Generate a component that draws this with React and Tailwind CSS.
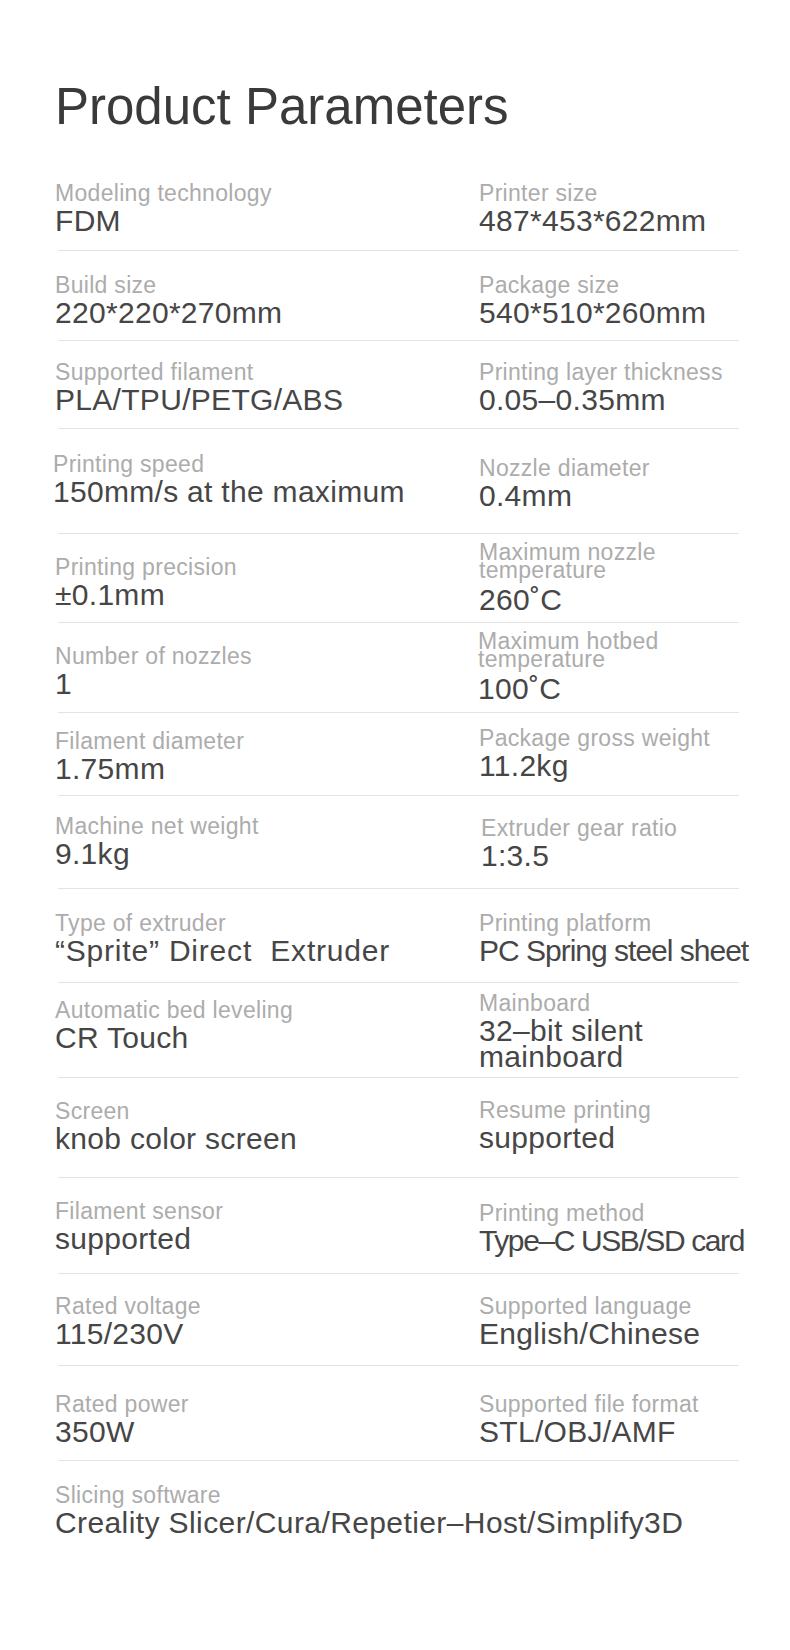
import React from 'react';

const rows = [
  {
    h: 'h-[118px]',
    left: { label: 'Modeling technology', value: 'FDM', pt: 'pt-[48px]' },
    right: { label: 'Printer size', value: '487*453*622mm', pt: 'pt-[48px]' },
  },
  {
    h: 'h-[89px]',
    left: { label: 'Build size', value: '220*220*270mm', pt: 'pt-[21px]' },
    right: { label: 'Package size', value: '540*510*260mm', pt: 'pt-[21px]' },
  },
  {
    h: 'h-[87px]',
    left: { label: 'Supported filament', value: 'PLA/TPU/PETG/ABS', pt: 'pt-[18px]' },
    right: { label: 'Printing layer thickness', value: '0.05–0.35mm', pt: 'pt-[18px]' },
  },
  {
    h: 'h-[104px]',
    left: { label: 'Printing speed', value: '150mm/s at the maximum', pt: 'pt-[22px]', shift: '-ml-[2px]' },
    right: { label: 'Nozzle diameter', value: '0.4mm', pt: 'pt-[26px]' },
  },
  {
    h: 'h-[88px]',
    left: { label: 'Printing precision', value: '±0.1mm', pt: 'pt-[20px]' },
    right: { label: ['Maximum nozzle', 'temperature'], value: '260˚C', pt: 'pt-[9px]' },
  },
  {
    h: 'h-[89px]',
    left: { label: 'Number of nozzles', value: '1', pt: 'pt-[20px]' },
    right: { label: ['Maximum hotbed', 'temperature'], value: '100˚C', pt: 'pt-[9px]', shift: '-ml-[1px]' },
  },
  {
    h: 'h-[82px]',
    left: { label: 'Filament diameter', value: '1.75mm', pt: 'pt-[15px]' },
    right: { label: 'Package gross weight', value: '11.2kg', pt: 'pt-[12px]' },
  },
  {
    h: 'h-[92px]',
    left: { label: 'Machine net weight', value: '9.1kg', pt: 'pt-[17px]' },
    right: { label: 'Extruder gear ratio', value: '1:3.5', pt: 'pt-[19px]', shift: 'ml-[2px]' },
  },
  {
    h: 'h-[93px]',
    left: {
      label: 'Type of extruder',
      value: '“Sprite” Direct  Extruder',
      pt: 'pt-[21px]',
      squeeze: 'tracking-[0.8px]',
    },
    right: {
      label: 'Printing platform',
      value: 'PC Spring steel sheet',
      pt: 'pt-[21px]',
      squeeze: 'tracking-[-1px]',
    },
  },
  {
    h: 'h-[94px]',
    left: { label: 'Automatic bed leveling', value: 'CR Touch', pt: 'pt-[14px]' },
    right: { label: 'Mainboard', value: ['32–bit silent', 'mainboard'], pt: 'pt-[7px]' },
  },
  {
    h: 'h-[99px]',
    left: { label: 'Screen', value: 'knob color screen', pt: 'pt-[20px]' },
    right: { label: 'Resume printing', value: 'supported', pt: 'pt-[19px]' },
  },
  {
    h: 'h-[95px]',
    left: { label: 'Filament sensor', value: 'supported', pt: 'pt-[20px]' },
    right: {
      label: 'Printing method',
      value: 'Type–C USB/SD card',
      pt: 'pt-[22px]',
      squeeze: 'tracking-[-1.4px]',
    },
  },
  {
    h: 'h-[91px]',
    left: { label: 'Rated voltage', value: '115/230V', pt: 'pt-[19px]' },
    right: { label: 'Supported language', value: 'English/Chinese', pt: 'pt-[19px]' },
  },
  {
    h: 'h-[94px]',
    left: { label: 'Rated power', value: '350W', pt: 'pt-[25px]' },
    right: { label: 'Supported file format', value: 'STL/OBJ/AMF', pt: 'pt-[25px]' },
  },
];

const labelCls = 'text-[23px] tracking-[0.3px] text-[#acacac] whitespace-nowrap';
const valueCls = 'text-[30px] text-[#464646] whitespace-pre';

const Cell = ({ item }) => {
  const twoLineLabel = Array.isArray(item.label);
  const twoLineValue = Array.isArray(item.value);

  return (
    <div className={`${item.pt} ${item.shift || ''}`}>
      {twoLineLabel ? (
        <div className={`${labelCls} leading-[18px]`}>
          {item.label[0]}
          <br />
          {item.label[1]}
        </div>
      ) : (
        <div className={`${labelCls} leading-[26px]`}>{item.label}</div>
      )}
      {twoLineValue ? (
        <div className={`${valueCls} tracking-[0.3px] mt-[2px] leading-[26px]`}>
          {item.value[0]}
          <br />
          {item.value[1]}
        </div>
      ) : (
        <div
          className={`${valueCls} ${item.squeeze || 'tracking-[0.3px]'} ${
            twoLineLabel ? 'mt-[6px]' : ''
          } leading-[30px]`}
        >
          {item.value}
        </div>
      )}
    </div>
  );
};

const App = () => {
  return (
    <div className="min-h-[1650px] w-[790px] bg-white font-['Liberation_Sans',Arial,sans-serif] overflow-hidden">
      <div className="pl-[55px]">
        <h1 className="pt-[82px] text-[51px] leading-[50px] text-[#3a3a3a] whitespace-nowrap">
          Product Parameters
        </h1>

        {rows.map((row, i) => (
          <div key={i}>
            <div className={`grid grid-cols-[424px_1fr] ${row.h}`}>
              <Cell item={row.left} />
              <Cell item={row.right} />
            </div>
            <div className="ml-[3px] w-[681px] h-px bg-[#e3e3e3]" />
          </div>
        ))}

        <div className="pt-[21px]">
          <div className={`${labelCls} leading-[26px]`}>Slicing software</div>
          <div className={`${valueCls} tracking-[0.4px] leading-[30px]`}>
            Creality Slicer/Cura/Repetier–Host/Simplify3D
          </div>
        </div>
      </div>
    </div>
  );
};

export default App;
